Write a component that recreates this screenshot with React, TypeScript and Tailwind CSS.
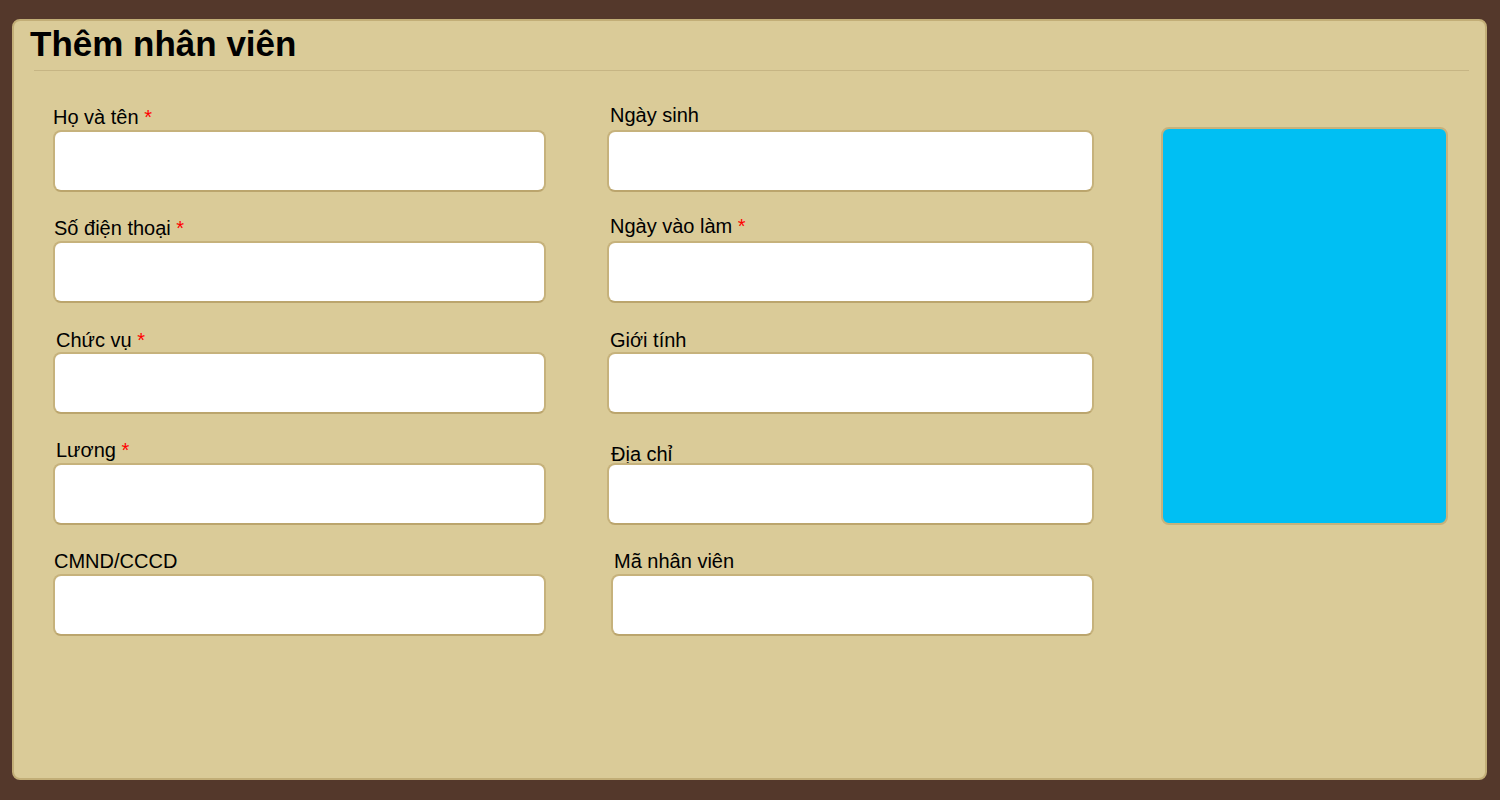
import React from 'react';

type Field = {
  label: string;
  required?: boolean;
  labelClass: string;
  inputClass?: string;
};

const leftFields: Field[] = [
  { label: 'Họ và tên', required: true, labelClass: 'pl-0 pb-[1px]' },
  { label: 'Số điện thoại', required: true, labelClass: 'pl-[1px] pb-[1px]' },
  { label: 'Chức vụ', required: true, labelClass: 'pl-[3px] pb-0' },
  { label: 'Lương', required: true, labelClass: 'pl-[3px] pb-[1px]' },
  { label: 'CMND/CCCD', labelClass: 'pl-[1px] pb-[1px]' },
];

const rightFields: Field[] = [
  { label: 'Ngày sinh', labelClass: 'pl-[3px] pb-[3px]' },
  { label: 'Ngày vào làm', required: true, labelClass: 'pl-[3px] pb-[3px]' },
  { label: 'Giới tính', labelClass: 'pl-[3px] pb-0' },
  { label: 'Địa chỉ', labelClass: 'pl-[4px] mb-[-3px]' },
  { label: 'Mã nhân viên', labelClass: 'pl-[7px] pb-[1px]', inputClass: 'ml-[4px]' },
];

function FormField({ field }: { field: Field }) {
  return (
    <div className="flex flex-col">
      <div className="h-[26px] flex items-end">
        <label className={`text-[20px] leading-[24px] text-black ${field.labelClass}`}>
          {field.label}
          {field.required && <span className="text-[#ff0000]"> *</span>}
        </label>
      </div>
      <input
        type="text"
        className={`h-[62px] bg-white border-2 border-[#c6b27c] border-b-[#bba56d] rounded-[8px] outline-none px-3 text-[18px] ${field.inputClass ?? ''}`}
      />
    </div>
  );
}

function App() {
  return (
    <div
      className="w-[1500px] h-[800px] bg-[#54382b] pt-[19px] pl-[12px] pr-[13px] pb-[20px]"
      style={{ fontFamily: '"Liberation Sans", Arial, sans-serif' }}
    >
      <div className="h-full bg-[#dacb98] border-2 border-[#c2ae77] rounded-[8px] flex flex-col">
        <h1 className="pt-[3px] pl-[16px] text-[35px] leading-[40px] font-bold text-black">
          Thêm nhân viên
        </h1>
        <div className="mt-[6px] ml-[20px] mr-[16px] h-px bg-[#c6b584]" />
        <div className="flex items-start mt-[33px] pl-[39px]">
          <div className="w-[493px] flex flex-col gap-[23px]">
            {leftFields.map((f) => (
              <FormField key={f.label} field={f} />
            ))}
          </div>
          <div className="w-[487px] ml-[61px] flex flex-col gap-[23px]">
            {rightFields.map((f) => (
              <FormField key={f.label} field={f} />
            ))}
          </div>
          <div className="w-[287px] h-[398px] ml-[67px] mt-[23px] bg-[#00bff3] border-2 border-[#c6b27c] rounded-[8px]" />
        </div>
      </div>
    </div>
  );
}

export default App;
